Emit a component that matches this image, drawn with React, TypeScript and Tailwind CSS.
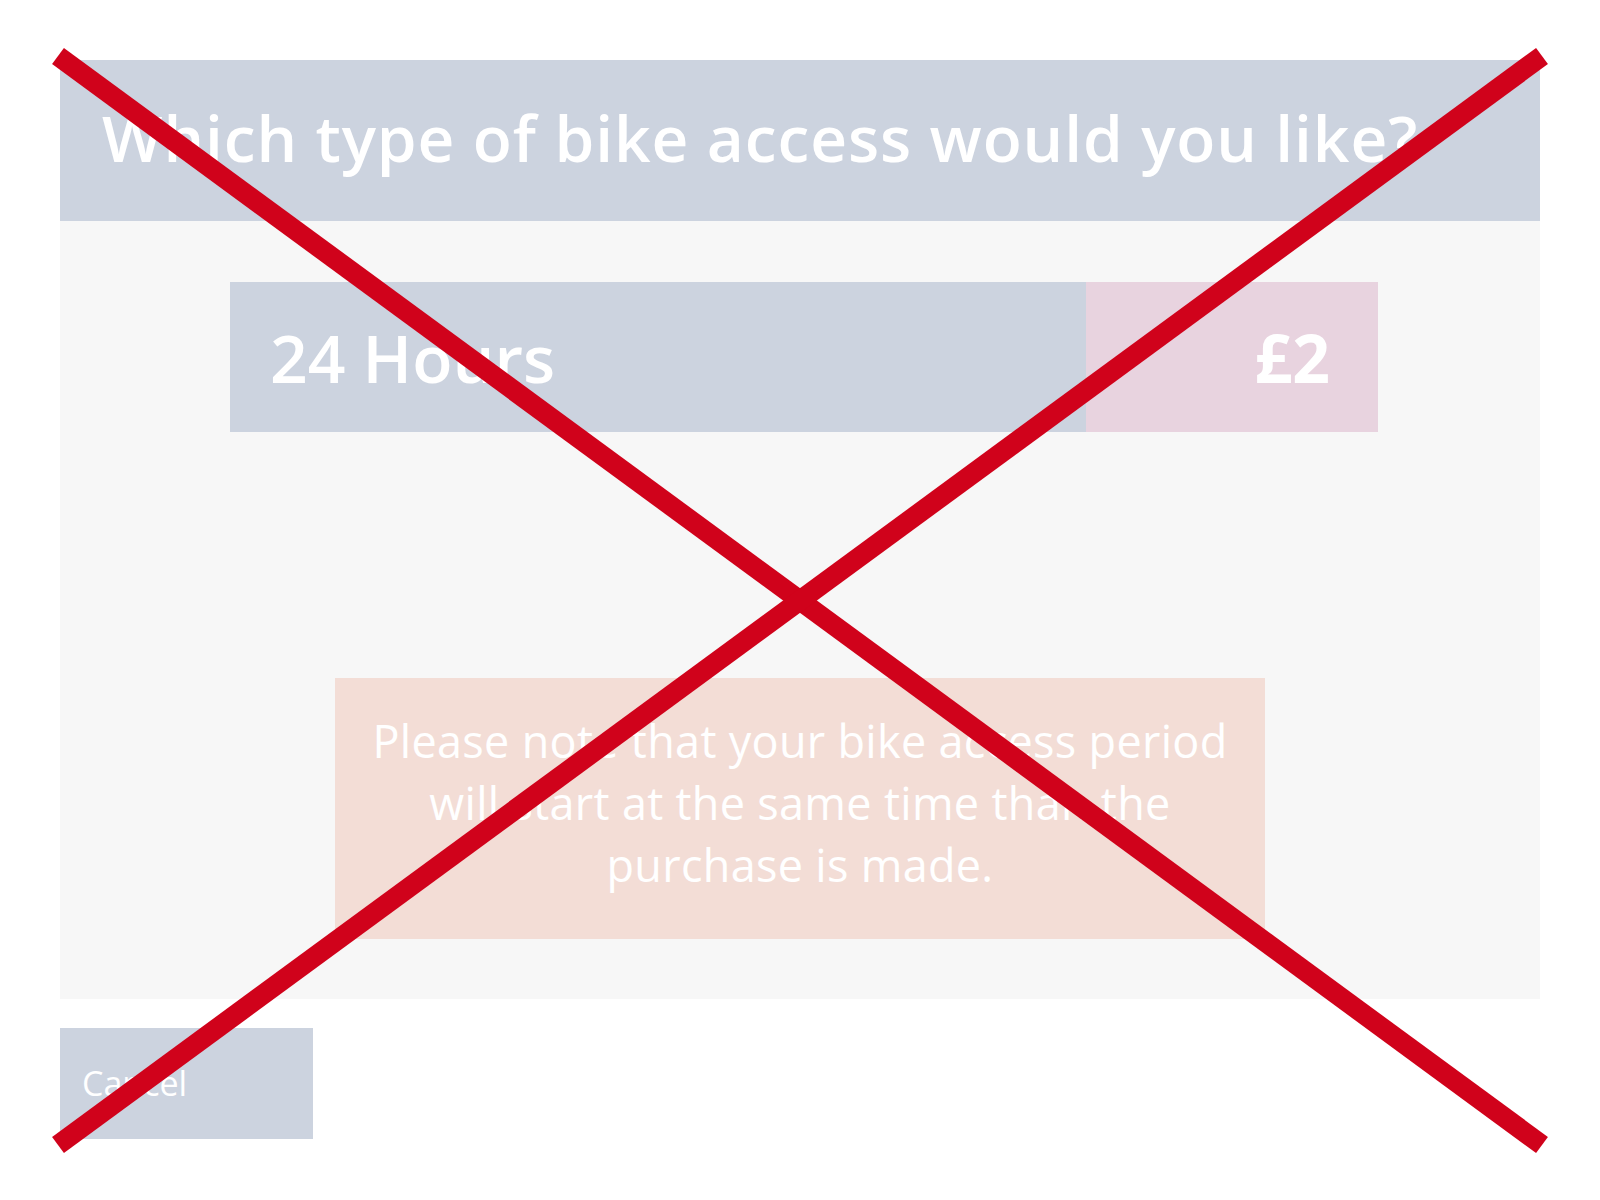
import React from "react";

const BikeAccessPicker: React.FC = () => (
  <div className="px-[60px] pt-[60px]">
    <div className="bg-[#ccd3df] h-[161px] flex items-center pl-[42px] pb-[6px]">
      <h1 className="text-white text-[64px] font-semibold leading-none tracking-[0.9px]">
        Which type of bike access would you like?
      </h1>
    </div>
    <div className="bg-[#f7f7f7] h-[778px] pt-[61px]">
      <div className="ml-[170px] w-[1148px] h-[150px] flex">
        <div className="flex-1 bg-[#ccd3df] flex items-center pl-[40px] text-white text-[66px] font-semibold">
          24 Hours
        </div>
        <div className="w-[292px] bg-[#e8d3df] flex items-center justify-end pr-[48px] text-white text-[66px] font-bold">
          £2
        </div>
      </div>
      <div className="mt-[246px] mx-auto w-[930px] h-[261px] bg-[#f3ddd6] flex items-center justify-center pb-[12px]">
        <p className="text-white text-center text-[45px] leading-[62px] tracking-[0.3px]">
          Please note that your bike access period
          <br />
          will start at the same time than the
          <br />
          purchase is made.
        </p>
      </div>
    </div>
    <button className="mt-[29px] w-[253px] h-[111px] bg-[#ccd3df] text-white text-[34px] text-left pl-[22px]">
      Cancel
    </button>
  </div>
);

export default function App() {
  return (
    <div className="relative min-h-[1200px] bg-white font-['Open_Sans',sans-serif]">
      <BikeAccessPicker />
      {/* broken-image cross drawn over the whole screen */}
      <svg
        className="absolute inset-0 pointer-events-none"
        width="1600"
        height="1200"
        viewBox="0 0 1600 1200"
      >
        <line x1="58" y1="56" x2="1542" y2="1145" stroke="#d0021b" strokeWidth="20" />
        <line x1="1542" y1="56" x2="58" y2="1145" stroke="#d0021b" strokeWidth="20" />
      </svg>
    </div>
  );
}
